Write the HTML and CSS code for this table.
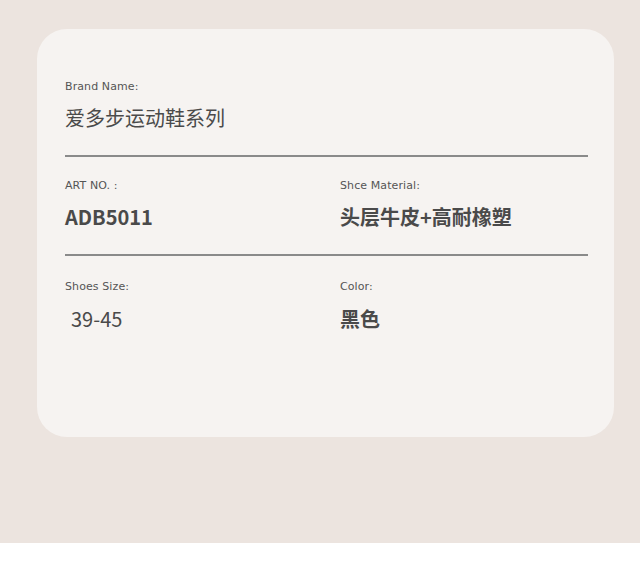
FILE: index.html
```html
<!DOCTYPE html>
<html lang="zh-CN">
	<head>
		<meta charset="UTF-8" />
		<meta name="viewport" content="width=device-width, initial-scale=1.0" />
		<title>产品参数</title>
		<link rel="stylesheet" href="styles.css">
	</head>
	<body>
		<div class="page">
			<div class="card">
				<div class="row">
					<div class="field">
						<div class="label">Brand Name:</div>
						<div class="value">爱多步运动鞋系列</div>
					</div>
				</div>
				<hr class="divider" />
				<div class="row cols">
					<div class="field">
						<div class="label">ART NO. :</div>
						<div class="value bold">ADB5011</div>
					</div>
					<div class="field">
						<div class="label">Shce Material:</div>
						<div class="value bold">头层牛皮+高耐橡塑</div>
					</div>
				</div>
				<hr class="divider" />
				<div class="row cols last">
					<div class="field">
						<div class="label">Shoes Size:</div>
						<div class="value size">39-45</div>
					</div>
					<div class="field">
						<div class="label">Color:</div>
						<div class="value bold">黑色</div>
					</div>
				</div>
			</div>
		</div>
	</body>
</html>
```
FILE: styles.css
```css
body {
	margin: 0;
	background: #ffffff;
	font-family: "Noto Sans CJK SC", "Noto Sans", sans-serif;
	color: #555555;
}
.page {
	background: #ece4df;
	height: 543px;
	padding: 29px 26px 0 37px;
	box-sizing: border-box;
}
.card {
	background: #f6f3f1;
	border-radius: 30px;
	height: 408px;
	padding: 50px 26px 0 28px;
	box-sizing: border-box;
}
.row {
	display: flex;
}
.cols {
	display: grid;
	grid-template-columns: 275px 1fr;
}
.last {
	padding-top: 2px;
}
.label {
	font-family: "DejaVu Sans", sans-serif;
	font-size: 11px;
	line-height: 16px;
	color: #555555;
	letter-spacing: 0.1px;
}
.value {
	margin-top: 10px;
	font-size: 20px;
	line-height: 26px;
	color: #4a4a4a;
}
.last .value {
	margin-top: 11px;
}
.value.bold {
	font-weight: bold;
}
.value.size {
	padding-left: 6px;
}
.divider {
	border: none;
	height: 2px;
	background: #8a8a8a;
	margin: 24px 0 21px;
}
```
